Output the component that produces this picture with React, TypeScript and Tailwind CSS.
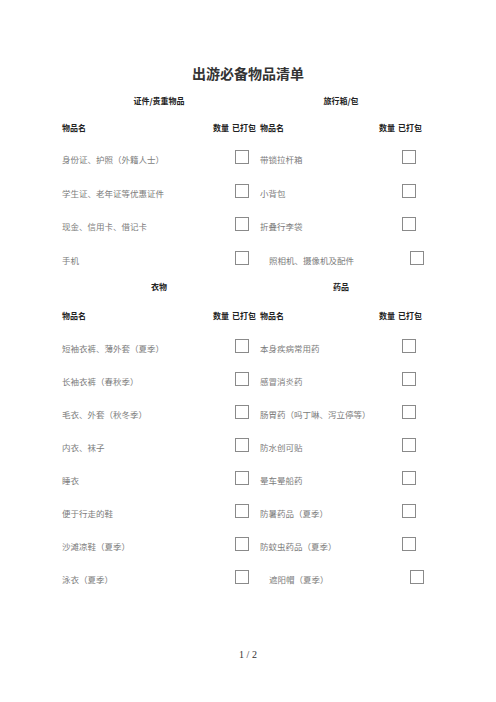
import React from "react";

const font = { fontFamily: '"Noto Sans CJK SC", "Noto Sans", sans-serif' };

type Item = { name: string; indent?: boolean };

const sec1L: Item[] = [
  { name: "身份证、护照（外籍人士）" },
  { name: "学生证、老年证等优惠证件" },
  { name: "现金、信用卡、借记卡" },
  { name: "手机" },
];
const sec1R: Item[] = [
  { name: "带锁拉杆箱" },
  { name: "小背包" },
  { name: "折叠行李袋" },
  { name: "照相机、摄像机及配件", indent: true },
];
const sec2L: Item[] = [
  { name: "短袖衣裤、薄外套（夏季）" },
  { name: "长袖衣裤（春秋季）" },
  { name: "毛衣、外套（秋冬季）" },
  { name: "内衣、袜子" },
  { name: "睡衣" },
  { name: "便于行走的鞋" },
  { name: "沙滩凉鞋（夏季）" },
  { name: "泳衣（夏季）" },
];
const sec2R: Item[] = [
  { name: "本身疾病常用药" },
  { name: "感冒消炎药" },
  { name: "肠胃药（吗丁啉、泻立停等）" },
  { name: "防水创可贴" },
  { name: "晕车晕船药" },
  { name: "防暑药品（夏季）" },
  { name: "防蚊虫药品（夏季）" },
  { name: "遮阳帽（夏季）", indent: true },
];

function Box() {
  return <div className="w-[14px] h-[14px] border border-[#8a8a8a] bg-white -mt-[5px]" />;
}

function Column({
  title,
  items,
  width,
  boxLeft,
  gap,
  rowH,
  lead,
}: {
  title: string;
  items: Item[];
  width: string;
  boxLeft: string;
  gap: string;
  rowH: string;
  lead: string;
}) {
  return (
    <div className={`flex flex-col ${width}`}>
      <div className="h-[16px] flex items-center justify-center text-[8px] font-bold text-[#222]">{title}</div>
      <div className={gap} />
      <div className="h-[16px] flex items-center text-[8px] font-bold text-[#222]">
        <span className="flex-1">物品名</span>
        <span className="mr-[3px]">数量</span>
        <span>已打包</span>
      </div>
      <div className={lead} />
      {items.map((it) => (
        <div key={it.name} className={`${rowH} flex items-center text-[8.5px] text-[#7c7c7c]`}>
          <span className={`flex-1 ${it.indent ? "pl-[9px]" : ""}`}>{it.name}</span>
          <div className={it.indent ? "mr-[-8px]" : ""}>
            <div className={boxLeft}>
              <Box />
            </div>
          </div>
        </div>
      ))}
    </div>
  );
}

export default function App() {
  return (
    <div className="w-[496px] h-[702px] bg-white relative" style={font}>
      <div className="pt-[59px] h-[87px] flex justify-center">
        <div className="text-[14px] leading-[28px] font-bold text-[#333]">出游必备物品清单</div>
      </div>
      <div className="pl-[62px] flex">
        <div className="flex flex-col">
          <div className="h-[6px]" />
          <div className="flex gap-[4px]">
            <Column title="证件/贵重物品" items={sec1L} width="w-[194px]" boxLeft="mr-[7px]" gap="h-[11px]" rowH="h-[33.5px]" lead="h-[7px]" />
            <Column title="旅行箱/包" items={sec1R} width="w-[162px]" boxLeft="mr-[6px]" gap="h-[11px]" rowH="h-[33.5px]" lead="h-[7px]" />
          </div>
          <div className="h-[2px]" />
          <div className="flex gap-[4px]">
            <Column title="衣物" items={sec2L} width="w-[194px]" boxLeft="mr-[7px]" gap="h-[13px]" rowH="h-[33px]" lead="h-[8px]" />
            <Column title="药品" items={sec2R} width="w-[162px]" boxLeft="mr-[6px]" gap="h-[13px]" rowH="h-[33px]" lead="h-[8px]" />
          </div>
        </div>
      </div>
      <div className="absolute left-0 right-0 top-[647px] flex justify-center text-[10px] text-[#333]" style={{ fontFamily: '"Liberation Serif", serif' }}>
        1 / 2
      </div>
    </div>
  );
}
